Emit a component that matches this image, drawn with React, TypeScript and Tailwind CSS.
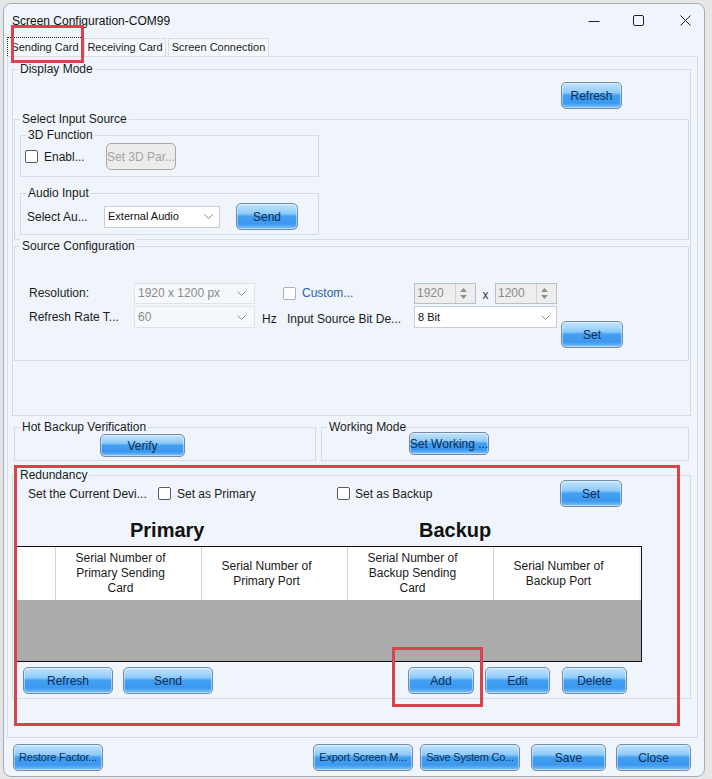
import React from "react";

const btn =
  "flex shrink-0 items-center justify-center rounded-[5px] border border-[#7489a6] bg-[linear-gradient(180deg,#c4e4fd_0%,#8fcbfa_38%,#42a0f2_50%,#3b98ef_80%,#7fc3f8_100%)] text-[12px] text-[#0f2c55] shadow-[inset_0_0_0_1px_rgba(255,255,255,0.45)] whitespace-nowrap overflow-hidden leading-none";

function Group({
  label,
  className,
  children,
}: {
  label: string;
  className: string;
  children?: React.ReactNode;
}) {
  return (
    <div className={"border border-[#d3dce5] " + className}>
      <div className="-mt-[8px] ml-[5px] px-[2px] w-fit bg-[#eff5fb] leading-[14px] text-[12px] text-[#1b1b1b] whitespace-nowrap">
        {label}
      </div>
      {children}
    </div>
  );
}

function Check({ light }: { light?: boolean }) {
  return (
    <div
      className={
        "w-[13px] h-[13px] shrink-0 rounded-[2px] border bg-white " +
        (light ? "border-[#a9b1b9]" : "border-[#5a5a5a]")
      }
    />
  );
}

function Chevron() {
  return (
    <svg width="9" height="5" viewBox="0 0 9 5" className="shrink-0">
      <path d="M0.5 0.5 L4.5 4.5 L8.5 0.5" stroke="#8a8a8a" fill="none" strokeWidth="1" />
    </svg>
  );
}

function Spin({ value }: { value: string }) {
  return (
    <div className="flex h-[21px] w-[62px] shrink-0 items-stretch border border-[#b9c0c7] bg-[#eeeeee] text-[12px] text-[#8b8b8b]">
      <div className="flex flex-1 items-center pl-[2px]">{value}</div>
      <div className="flex w-[15px] flex-col items-center justify-center gap-[3px] border-l border-[#cfd3d7] mr-[5px]">
        <svg width="7" height="4" viewBox="0 0 7 4">
          <path d="M0 4 L3.5 0 L7 4 Z" fill="#8f8f8f" />
        </svg>
        <svg width="7" height="4" viewBox="0 0 7 4">
          <path d="M0 0 L3.5 4 L7 0 Z" fill="#8f8f8f" />
        </svg>
      </div>
    </div>
  );
}

export default function App() {
  return (
    <div className="relative w-[712px] h-[779px] bg-[#e6e6e6] pt-[3px] pl-[3px] font-['Liberation_Sans',Arial,sans-serif] text-[#1b1b1b] overflow-hidden">
      <div className="w-[702px] h-[774px] rounded-[8px] border border-[#a3adb7] bg-[#eff5fb] flex flex-col">
        {/* title bar */}
        <div className="h-[33px] flex items-center shrink-0">
          <div className="ml-[8px] text-[12px] text-[#111]">Screen Configuration-COM99</div>
          <div className="ml-auto mr-[13px] flex items-center">
            <svg width="12" height="12" viewBox="0 0 12 12">
              <path d="M0.5 6.5 H11.5" stroke="#222" strokeWidth="1" />
            </svg>
            <svg width="11" height="11" viewBox="0 0 11 11" className="ml-[33px]">
              <rect x="0.5" y="0.5" width="10" height="10" rx="1.5" stroke="#222" fill="none" strokeWidth="1" />
            </svg>
            <svg width="11" height="11" viewBox="0 0 11 11" className="ml-[36px]">
              <path d="M0.5 0.5 L10.5 10.5 M10.5 0.5 L0.5 10.5" stroke="#222" strokeWidth="1" />
            </svg>
          </div>
        </div>
        {/* tabs */}
        <div className="h-[19px] flex items-end pl-[3px] shrink-0 text-[11px]">
          <div className="h-[19px] w-[76px] flex items-center justify-center bg-[#f3f8fc] border border-dotted border-[#222] border-b-0">
            Sending Card
          </div>
          <div className="ml-[1px] h-[18px] w-[82px] flex items-center justify-center bg-[#f6f9fb] border border-[#d6dde4] border-b-0">
            Receiving Card
          </div>
          <div className="ml-[2px] h-[18px] w-[101px] flex items-center justify-center bg-[#f6f9fb] border border-[#d6dde4] border-b-0">
            Screen Connection
          </div>
        </div>
        {/* tab panel */}
        <div className="ml-[3px] w-[691px] h-[682px] shrink-0 border border-[#d6dee6] bg-[#eff5fb] flex flex-col">
          {/* Display Mode */}
          <Group label="Display Mode" className="ml-[4px] mt-[12px] w-[679px] pb-[54px]">
            <div className={btn + " ml-[548px] mt-[6px] w-[61px] h-[27px]"}>Refresh</div>
            {/* Select Input Source */}
            <Group label="Select Input Source" className="ml-[1px] mt-[10px] w-[675px] pb-[4px]">
              <Group label="3D Function" className="ml-[5px] mt-[9px] w-[299px] pb-[6px]">
                <div className="mt-[1px] h-[27px] flex items-center text-[12px]">
                  <div className="ml-[4px]">
                    <Check />
                  </div>
                  <div className="ml-[6px] w-[62px]">Enabl...</div>
                  <div className="flex h-[27px] w-[70px] items-center justify-center rounded-[5px] border border-[#a7a7a7] bg-[#ececec] text-[12px] text-[#a3a3a3] whitespace-nowrap overflow-hidden">
                    Set 3D Par...
                  </div>
                </div>
              </Group>
              <Group label="Audio Input" className="ml-[5px] mt-[16px] w-[299px] pb-[4px]">
                <div className="mt-[3px] h-[27px] flex items-center text-[12px]">
                  <div className="ml-[6px] w-[77px] whitespace-nowrap">Select Au...</div>
                  <div className="flex h-[22px] w-[116px] items-center justify-between border border-[#c9ced4] bg-white pl-[3px] pr-[6px] text-[11px] text-[#111]">
                    External Audio
                    <Chevron />
                  </div>
                  <div className={btn + " ml-[16px] w-[62px] h-[27px]"}>Send</div>
                </div>
              </Group>
            </Group>
            {/* Source Configuration */}
            <Group label="Source Configuration" className="ml-[1px] mt-[6px] w-[675px] pb-[12px]">
              <div className="mt-[29px] h-[22px] flex items-center text-[12px]">
                <div className="ml-[14px] w-[105px]">Resolution:</div>
                <div className="flex h-[21px] w-[121px] items-center justify-between border border-[#dde3e8] bg-[#f6f9fb] pl-[3px] pr-[8px] text-[12px] text-[#8a8a8a]">
                  1920 x 1200 px
                  <Chevron />
                </div>
                <div className="ml-[28px]">
                  <Check light />
                </div>
                <div className="ml-[6px] w-[112px] text-[#2a63a8]">Custom...</div>
                <Spin value="1920" />
                <div className="w-[19px] text-center pt-[4px] text-[#333]">x</div>
                <Spin value="1200" />
              </div>
              <div className="mt-[2px] flex items-start text-[12px]">
                <div className="h-[22px] flex items-center">
                  <div className="ml-[14px] w-[105px] whitespace-nowrap">Refresh Rate T...</div>
                  <div className="flex h-[22px] w-[121px] items-center justify-between border border-[#dde3e8] bg-[#f6f9fb] pl-[3px] pr-[8px] text-[12px] text-[#8a8a8a]">
                    60
                    <Chevron />
                  </div>
                  <div className="w-[32px] pl-[7px] pt-[4px]">Hz</div>
                  <div className="w-[127px] whitespace-nowrap pt-[4px]">Input Source Bit De...</div>
                  <div className="flex h-[22px] w-[143px] items-center justify-between border border-[#c9ced4] bg-white pl-[3px] pr-[6px] text-[11px] text-[#111]">
                    8 Bit
                    <Chevron />
                  </div>
                </div>
                <div className={btn + " ml-[4px] mt-[15px] w-[62px] h-[27px]"}>Set</div>
              </div>
            </Group>
          </Group>
          {/* Hot backup / Working mode */}
          <div className="mt-[11px] flex">
            <Group label="Hot Backup Verification" className="ml-[6px] w-[302px] h-[34px]">
              <div className={btn + " ml-[85px] w-[85px] h-[23px]"}>Verify</div>
            </Group>
            <Group label="Working Mode" className="ml-[5px] w-[368px] h-[34px]">
              <div className={btn + " ml-[87px] -mt-[2px] w-[80px] h-[23px]"}>Set Working ...</div>
            </Group>
          </div>
          {/* Redundancy */}
          <Group label="Redundancy" className="ml-[4px] mt-[14px] w-[679px] pb-[4px]">
            <div className="-mt-[2px] h-[27px] flex items-center text-[12px]">
              <div className="ml-[15px] w-[130px] whitespace-nowrap">Set the Current Devi...</div>
              <Check />
              <div className="ml-[6px] w-[160px]">Set as Primary</div>
              <Check />
              <div className="ml-[5px] w-[205px]">Set as Backup</div>
              <div className={btn + " w-[62px] h-[27px]"}>Set</div>
            </div>
            <div className="mt-[11px] flex h-[24px] items-center text-[20px] font-bold text-[#111] leading-[24px]">
              <div className="ml-[117px] w-[289px]">Primary</div>
              <div>Backup</div>
            </div>
            <div className="ml-[1px] mt-[4px] w-[628px] border border-[#111] flex flex-col">
              <div className="h-[53px] flex bg-white text-[12px] leading-[15px] text-[#1a1a1a] text-center">
                <div className="w-[40px] shrink-0" />
                <div className="w-[146px] shrink-0 border-l border-[#d4d4d4] flex items-center justify-center pr-[16px]">
                  Serial Number of
                  <br />
                  Primary Sending
                  <br />
                  Card
                </div>
                <div className="w-[146px] shrink-0 border-l border-[#d4d4d4] flex items-center justify-center pr-[16px]">
                  Serial Number of
                  <br />
                  Primary Port
                </div>
                <div className="w-[146px] shrink-0 border-l border-[#d4d4d4] flex items-center justify-center pr-[16px]">
                  Serial Number of
                  <br />
                  Backup Sending
                  <br />
                  Card
                </div>
                <div className="w-[146px] shrink-0 border-l border-[#d4d4d4] flex items-center justify-center pr-[16px]">
                  Serial Number of
                  <br />
                  Backup Port
                </div>
                <div className="flex-1 bg-[#eff5fb]" />
              </div>
              <div className="h-[61px] bg-[#ababab]" />
            </div>
            <div className="mt-[5px] flex h-[27px]">
              <div className={btn + " ml-[10px] w-[90px] h-[27px]"}>Refresh</div>
              <div className={btn + " ml-[10px] w-[90px] h-[27px]"}>Send</div>
              <div className={btn + " ml-[195px] w-[66px] h-[27px]"}>Add</div>
              <div className={btn + " ml-[11px] w-[65px] h-[27px]"}>Edit</div>
              <div className={btn + " ml-[12px] w-[65px] h-[27px]"}>Delete</div>
            </div>
          </Group>
        </div>
        {/* bottom buttons */}
        <div className="mt-[6px] flex h-[27px] shrink-0">
          <div className={btn + " ml-[9px] w-[90px] h-[27px] !text-[11px] tracking-[-0.2px]"}>Restore Factor...</div>
          <div className={btn + " ml-[210px] w-[100px] h-[27px] !text-[11px] tracking-[-0.2px]"}>Export Screen M...</div>
          <div className={btn + " ml-[7px] w-[100px] h-[27px] !text-[11px] tracking-[-0.2px]"}>Save System Co...</div>
          <div className={btn + " ml-[11px] w-[75px] h-[27px]"}>Save</div>
          <div className={btn + " ml-[10px] w-[75px] h-[27px]"}>Close</div>
        </div>
      </div>
      {/* red annotation boxes */}
      <div className="absolute left-[11px] top-[25px] w-[73px] h-[38px] border-[3px] border-[#d9434b]" />
      <div className="absolute left-[14px] top-[465px] w-[666px] h-[261px] border-[3px] border-[#d9434b]" />
      <div className="absolute left-[392px] top-[647px] w-[91px] h-[60px] border-[3px] border-[#d9434b]" />
    </div>
  );
}
